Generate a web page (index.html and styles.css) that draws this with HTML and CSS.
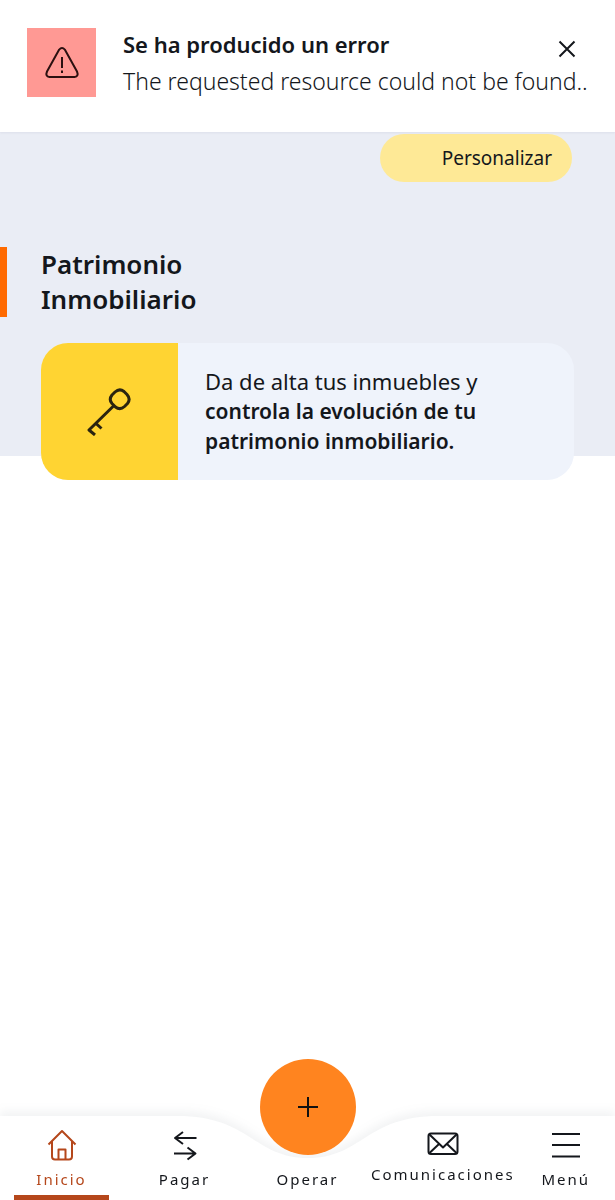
FILE: index.html
```html
<!DOCTYPE html>
<html lang="es">
<head>
  <meta charset="UTF-8" />
  <meta name="viewport" content="width=device-width, initial-scale=1.0" />
  <title>Inicio</title>
  <link rel="stylesheet" href="styles.css">
</head>
<body>
  <div class="toast" role="alert">
    <div class="toast-icon">
      <svg width="36" height="36" viewBox="0 0 36 36">
        <path d="M15.2 4.6 Q18 1.4 20.8 4.6 L33 26.5 Q35 31.4 30.5 32 H5.5 Q1 31.4 3 26.5 Z" />
        <path d="M18 12 V23 M18 25.5 V28" />
      </svg>
    </div>
    <div class="toast-text">
      <strong>Se ha producido un error</strong>
      <p>The requested resource could not be found..</p>
    </div>
    <button class="toast-close" aria-label="Cerrar">
      <svg width="18" height="18" viewBox="0 0 18 18"><path d="M1.5 1.5 L16.5 16.5 M16.5 1.5 L1.5 16.5" /></svg>
    </button>
  </div>

  <main class="content">
    <button class="customize">Personalizar</button>
    <h2>Patrimonio<br>Inmobiliario</h2>
    <a href="#" class="card">
      <span class="card-icon">
        <svg width="48" height="48" viewBox="0 0 48 48">
          <path d="M29 4 Q33.5 0 38 3.5 L41 6.5 Q45 11 41.500 15.500 L38.500 18.500 Q34 22.500 29.500 19 L26 15.500 Q22.500 11.500 26 7 Z" />
          <path d="M28 17.500 L3 42 L9 47 M10 35.500 L15.500 40.500" />
        </svg>
      </span>
      <span class="card-text">Da de alta tus inmuebles y <b>controla la evolución de tu patrimonio inmobiliario.</b></span>
    </a>
  </main>

  <nav class="tabbar">
    <div class="tabbar-bg">
      <div class="side"></div>
      <svg width="260" height="84" viewBox="0 0 260 84">
        <path d="M0 0 C72 0 76 42 130 42 C184 42 188 0 260 0 V84 H0 Z" />
      </svg>
      <div class="side"></div>
    </div>
    <a href="#" class="tab active">
      <svg width="30" height="32" viewBox="0 0 30 32">
        <path d="M1.5 15.5 L15 2 L28.5 15.5 M5 12.5 V27.5 Q5 30.5 8 30.5 H22 Q25 30.5 25 27.5 V12.5 M11.5 30 V20.5 H18.5 V30" />
      </svg>
      <span>Inicio</span>
    </a>
    <a href="#" class="tab">
      <svg width="30" height="32" viewBox="0 0 30 32">
        <path d="M26.5 9 H5 M13 3 L5 9 L13 15 M4 24.5 H25.5 M17.5 18.5 L25.5 24.5 L17.5 30.5" />
      </svg>
      <span>Pagar</span>
    </a>
    <a href="#" class="tab">
      <span class="plus">
        <svg width="20" height="20" viewBox="0 0 20 20"><path d="M10 0 V20 M0 10 H20" /></svg>
      </span>
      <span>Operar</span>
    </a>
    <a href="#" class="tab mail">
      <svg width="32" height="24" viewBox="0 0 32 24">
        <rect x="1.5" y="1.5" width="29" height="20.5" rx="2.5" />
        <path d="M2.5 2.5 L16 15.5 L29.5 2.5 M2.5 21 L12 12 M29.5 21 L20 12" />
      </svg>
      <span>Comunicaciones</span>
    </a>
    <a href="#" class="tab">
      <svg width="30" height="32" viewBox="0 0 30 32"><path d="M1 5 H29 M1 16 H29 M1 27.5 H29" /></svg>
      <span>Menú</span>
    </a>
  </nav>
</body>
</html>
```
FILE: styles.css
```css
* {
  box-sizing: border-box;
}
body {
  margin: 0;
  min-height: 100vh;
  background: #fff;
  color: #14171c;
  font-family: "Noto Sans", "Open Sans", sans-serif;
}
button {
  border: 0;
  padding: 0;
  font: inherit;
  color: inherit;
  cursor: pointer;
}
a {
  color: inherit;
  text-decoration: none;
}
svg {
  display: block;
  fill: none;
  stroke: currentColor;
  stroke-width: 2;
  stroke-linejoin: round;
}

/* error message */
.toast {
  position: sticky;
  top: 0;
  z-index: 2;
  display: flex;
  align-items: flex-start;
  padding: 28px 39px 28px 27px;
  min-height: 132px;
  background: #fff;
  box-shadow: 0 1px 2px rgba(60, 75, 110, 0.08);
}
.toast-icon {
  display: flex;
  flex: none;
  align-items: center;
  justify-content: center;
  width: 69px;
  height: 69px;
  background: #ff9994;
  color: #2b1010;
}
.toast-text {
  flex: 1;
  min-width: 0;
  margin-left: 27px;
  line-height: 32px;
}
.toast-text strong {
  display: block;
  font-size: 22px;
  font-weight: 600;
}
.toast-text p {
  margin: 5px 0 0;
  font-size: 23px;
  font-weight: 300;
  white-space: nowrap;
}
.toast-close {
  flex: none;
  margin-top: 12px;
  background: none;
}

/* content */
.content {
  display: flex;
  flex-direction: column;
  height: 324px;
  padding: 2px 41px 0;
  background: #eaedf5;
}
.customize {
  flex: none;
  align-self: flex-end;
  height: 48px;
  min-width: 192px;
  margin-right: 2px;
  padding: 0 20px;
  border-radius: 24px;
  background: #fee996;
  font-size: 19px;
  text-align: right;
}
h2 {
  margin: 65px -41px 26px;
  padding-left: 34px;
  border-left: 7px solid #ff6a00;
  font-size: 26px;
  font-weight: 600;
  line-height: 35px;
}
.card {
  display: flex;
  flex: none;
  min-height: 137px;
  border-radius: 27px;
  overflow: hidden;
  background: #eff3fb;
}
.card-icon {
  display: flex;
  flex: none;
  align-items: center;
  justify-content: center;
  width: 137px;
  background: #ffd432;
  color: #2a2410;
}
.card-icon svg {
  stroke-width: 3;
}
.card-text {
  align-self: center;
  max-width: 325px;
  padding-left: 27px;
  font-size: 22px;
  line-height: 29px;
}
.card-text b {
  font-size: 21px;
  font-weight: 600;
}

/* bottom bar */
.tabbar {
  position: fixed;
  left: 0;
  right: 0;
  bottom: 0;
  display: grid;
  grid-template-columns: minmax(0, 5fr) minmax(0, 5fr) minmax(0, 5fr) minmax(0, 6fr) minmax(0, 4fr);
  grid-template-rows: 84px;
  align-items: end;
}
.tabbar-bg {
  position: absolute;
  inset: 0;
  display: flex;
  filter: drop-shadow(0 -5px 5px rgba(70, 85, 100, 0.07));
}
.tabbar-bg .side {
  flex: 1;
  background: #fff;
}
.tabbar-bg svg {
  fill: #fff;
  stroke: none;
}
.tab {
  position: relative;
  display: flex;
  flex-direction: column;
  align-items: center;
  gap: 6px;
  padding-bottom: 9px;
  font-size: 15px;
  line-height: 24px;
  letter-spacing: 2px;
}
.tab.active {
  color: #b5471b;
}
.tab.active::after {
  content: "";
  position: absolute;
  left: 14px;
  right: 14px;
  bottom: 0;
  height: 5px;
  background: #b5471b;
}
.mail {
  padding-bottom: 14px;
}
.plus {
  display: flex;
  flex: none;
  align-items: center;
  justify-content: center;
  width: 96px;
  height: 96px;
  margin-bottom: 6px;
  border-radius: 50%;
  background: #ff841f;
  color: #111;
}
```
